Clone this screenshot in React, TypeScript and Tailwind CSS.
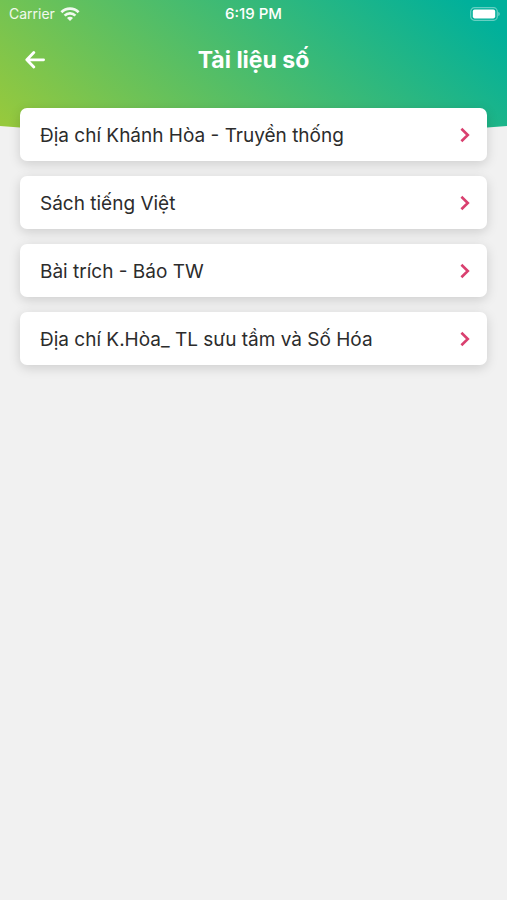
/* ---------- DATA ---------- */
interface Category {
  id: number;
  name: string;
}

const categories: Category[] = [
  { id: 1, name: 'Địa chí Khánh Hòa - Truyền thống' },
  { id: 2, name: 'Sách tiếng Việt' },
  { id: 3, name: 'Bài trích - Báo TW' },
  { id: 4, name: 'Địa chí K.Hòa_ TL sưu tầm và Số Hóa' },
];

/* ---------- ICONS ---------- */
const WifiIcon = () => (
  <svg className="w-5 h-[14px]" viewBox="0 0 20 14" fill="none" stroke="currentColor" strokeWidth={2.7}>
    <path d="M1.4 5.2a12.2 12.2 0 0 1 17.2 0" />
    <path d="M4.6 8.6a7.6 7.6 0 0 1 10.8 0" />
    <path d="M10 14l-3-3.1a4.2 4.2 0 0 1 6 0z" fill="currentColor" stroke="none" />
  </svg>
);

const BatteryIcon = () => (
  <svg className="w-[30px] h-[14px]" viewBox="0 0 30 14" fill="none">
    <rect x="0.7" y="0.7" width="26.6" height="12.6" rx="3.8" stroke="currentColor" strokeOpacity={0.4} strokeWidth={1.2} />
    <rect x="2.8" y="2.6" width="22.4" height="8.8" rx="1.8" fill="currentColor" />
    <path d="M28.4 5c1.7 0.7 1.7 3.3 0 4z" fill="currentColor" fillOpacity={0.5} />
  </svg>
);

const ArrowLeftIcon = () => (
  <svg
    className="w-5 h-5"
    viewBox="0 0 20 20"
    fill="none"
    stroke="currentColor"
    strokeWidth={2.8}
    strokeLinecap="round"
    strokeLinejoin="round"
  >
    <path d="M8.8 2.6L1.8 9.8L8.8 17M2.4 9.8h16.2" />
  </svg>
);

const ChevronIcon = () => (
  <svg className="w-[10px] h-4 text-[#d9406f]" viewBox="0 0 10 16" fill="none" stroke="currentColor" strokeWidth={2.6}>
    <path d="M1.4 1.8L7.8 8l-6.4 6.2" />
  </svg>
);

/* ---------- COMPONENTS ---------- */
const StatusBar = () => (
  <div className="grid grid-cols-3 items-center h-7 px-[7px] text-sm">
    <div className="flex items-center gap-[5px] pl-[2px] text-white/90">
      <span>Carrier</span>
      <WifiIcon />
    </div>
    <span className="text-center text-[15px] font-medium">6:19 PM</span>
    <div className="flex justify-end">
      <BatteryIcon />
    </div>
  </div>
);

const CategoryCard = ({ category }: { category: Category }) => (
  <button
    type="button"
    className="flex items-center justify-between w-full h-[53px] pl-5 pr-[17px] rounded-[7px] bg-white text-left text-[19px] text-[#2c2c2c] shadow-[0_3px_12px_rgba(0,0,0,0.15)]"
  >
    <span className="pt-[3px]">{category.name}</span>
    <ChevronIcon />
  </button>
);

/* ---------- PAGE ---------- */
const App = () => {
  return (
    <div className="min-h-screen bg-[#f1f1f1] font-['Inter','Noto_Sans',sans-serif]">
      <header className="relative h-[148px] text-white bg-[linear-gradient(40deg,#96c93d_5%,#00b09b_94%)]">
        <StatusBar />
        <div className="grid grid-cols-[36px_1fr_36px] items-center h-16 px-[17px]">
          <button type="button" aria-label="Quay lại" className="flex items-center justify-center h-9">
            <ArrowLeftIcon />
          </button>
          <h1 className="text-center text-[23px] font-bold">Tài liệu số</h1>
        </div>
        {/* curved bottom edge */}
        <svg
          className="absolute bottom-0 left-0 w-full h-[22px] text-[#f1f1f1]"
          viewBox="0 0 100 22"
          preserveAspectRatio="none"
          fill="currentColor"
        >
          <path d="M0 0Q50 22 100 0V22H0z" />
        </svg>
      </header>

      <main className="relative -mt-10 px-5 pb-10">
        <ul className="space-y-[15px]">
          {categories.map((category) => (
            <li key={category.id}>
              <CategoryCard category={category} />
            </li>
          ))}
        </ul>
      </main>
    </div>
  );
};

export default App;
